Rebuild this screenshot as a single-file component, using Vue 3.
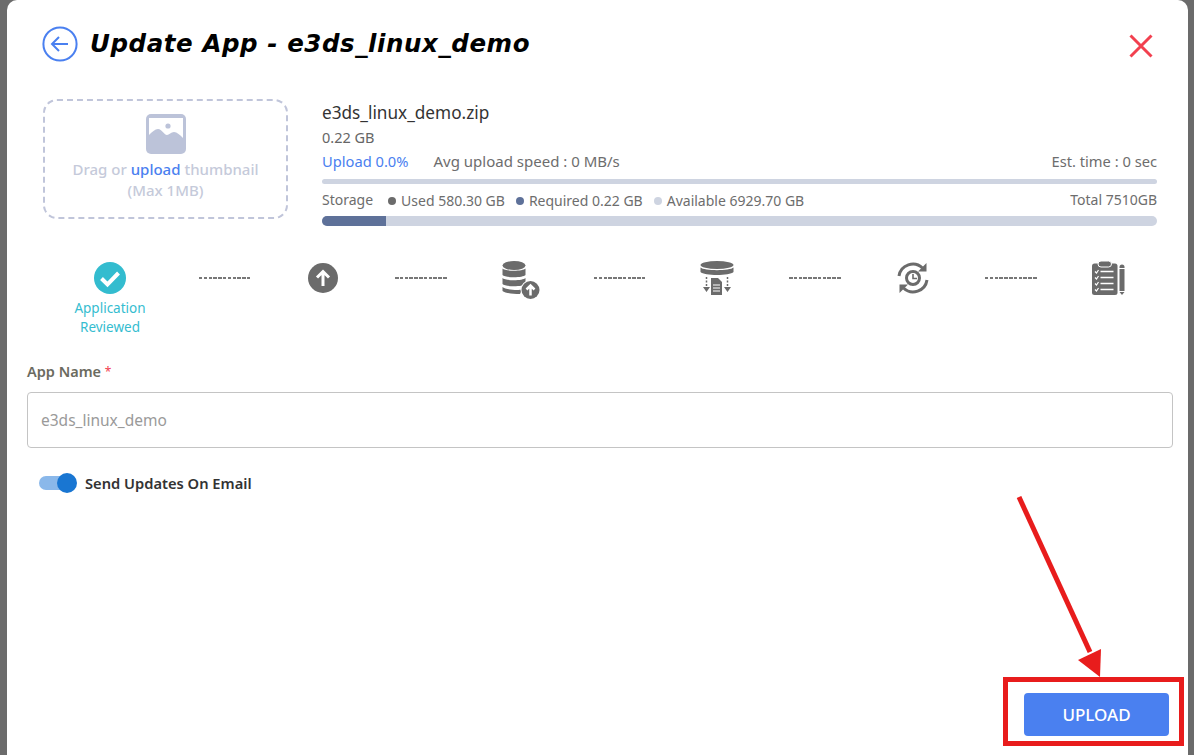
<script setup>
const legend = [
  { label: 'Used 580.30 GB', tone: 'used' },
  { label: 'Required 0.22 GB', tone: 'req' },
  { label: 'Available 6929.70 GB', tone: 'avail' }
]
</script>

<template>
  <div class="page">
    <main class="modal">
      <header class="head">
        <svg class="back" viewBox="0 0 36 36" fill="none" stroke="#4a80f0">
          <circle cx="18" cy="18" r="16.6" stroke-width="2" />
          <path d="M26 18H10M17 11l-7 7 7 7" stroke-width="2" />
        </svg>
        <h1 class="title">Update App - e3ds_linux_demo</h1>
        <svg class="close" viewBox="0 0 24 24" fill="none" stroke="#f2404f" stroke-width="3">
          <path d="M1.5 1.5l21 21M22.5 1.5l-21 21" />
        </svg>
      </header>

      <section class="info">
        <div class="drop">
          <svg class="thumb" viewBox="0 0 40 40">
            <rect width="40" height="40" rx="5" fill="#bcc3d9" />
            <path d="M3 4h34v20c-3-3-6-6-9-6-3 0-5 3-7 3-3 0-5-6-9-6-3 0-6 3-9 6z" fill="#fff" />
            <circle cx="22" cy="12" r="2.6" fill="#bcc3d9" />
          </svg>
          <p class="drop-text">Drag or <b>upload</b> thumbnail<br />(Max 1MB)</p>
        </div>
        <div class="meta">
          <div class="fname">e3ds_linux_demo.zip</div>
          <div class="fsize">0.22 GB</div>
          <div class="row up-row">
            <span class="up">Upload 0.0%</span>
            <span class="speed">Avg upload speed : 0 MB/s</span>
            <span class="push est">Est. time : 0 sec</span>
          </div>
          <div class="bar thin"></div>
          <div class="row store">
            <span class="store-l">Storage</span>
            <span v-for="item in legend" :key="item.tone" class="lg">
              <i :class="['dot', item.tone]"></i>{{ item.label }}
            </span>
            <span class="push">Total 7510GB</span>
          </div>
          <div class="bar thick"><div class="fill"></div></div>
        </div>
      </section>

      <section class="stepper">
        <div class="step first">
          <svg class="ic-check" viewBox="0 0 32 32">
            <circle cx="16" cy="16" r="16" fill="#33bccf" />
            <path d="M7.5 16.5l6 6L24.5 11" fill="none" stroke="#fff" stroke-width="4" />
          </svg>
          <div class="step-label">Application<br />Reviewed</div>
        </div>
        <i class="dash d1"></i>
        <svg class="ic-up" viewBox="0 0 30 30">
          <circle cx="15" cy="15" r="15" fill="#6b6b6b" />
          <path d="M15 23V9M9 14.5L15 8.5l6 6" fill="none" stroke="#fff" stroke-width="3" />
        </svg>
        <i class="dash d2"></i>
        <svg class="ic-db" viewBox="0 0 38 38" fill="#6b6b6b">
          <ellipse cx="12" cy="4.500" rx="11.500" ry="4.500" />
          <path d="M.5 7.500C3 10.500 21 10.500 23.500 7.500V14C21 17 3 17 .5 14z" />
          <path d="M.5 17C3 20 21 20 23.500 17V23C21 26 3 26 .5 23z" />
          <path d="M.5 26C3 29 17 29.500 20 28.500L18 33C10 33 3 32 .5 30z" />
          <circle cx="28.500" cy="29" r="10" fill="#fff" />
          <circle cx="28.500" cy="29" r="9" />
          <path d="M28.500 34.500V25M24.500 28.500l4-4 4 4" fill="none" stroke="#fff" stroke-width="2.500" />
        </svg>
        <i class="dash d3"></i>
        <svg class="ic-dbdoc" viewBox="0 0 34 34" fill="#6b6b6b">
          <ellipse cx="17" cy="4" rx="16.500" ry="4" />
          <path d="M.5 6.500C4 10 30 10 33.500 6.500V11C30 15 4 15 .5 11z" />
          <path d="M11 17h7l4 4v13H11z" />
          <path d="M13 24h7M13 27h7M13 30h7" stroke="#fff" stroke-width="1.200" />
          <path d="M6.500 16v12" stroke="#6b6b6b" stroke-width="1.500" stroke-dasharray="2 1.500" />
          <path d="M27.500 16v12" stroke="#6b6b6b" stroke-width="1.500" stroke-dasharray="2 1.500" />
          <path d="M3 26h7l-3.500 5zM24 26h7l-3.500 5z" />
        </svg>
        <i class="dash d4"></i>
        <svg class="ic-sync" viewBox="0 0 32 32" fill="none" stroke="#6b6b6b" stroke-width="3">
          <path d="M2 14A14 14 0 0 1 25.500 6" />
          <path d="M30 18A14 14 0 0 1 6.500 26" />
          <path d="M29.500 1v8.500H21z" fill="#6b6b6b" stroke="none" />
          <path d="M2.500 31v-8.500H11z" fill="#6b6b6b" stroke="none" />
          <circle cx="16" cy="16" r="6.500" stroke-width="3" />
          <path d="M16 12v4.500h4" stroke-width="1.600" />
        </svg>
        <i class="dash d5"></i>
        <svg class="ic-clip" viewBox="0 0 34 34" fill="#6b6b6b">
          <rect x="0" y="2.500" width="25.500" height="31.500" rx="2.500" />
          <rect x="6" y="0" width="13.500" height="6" rx="3" stroke="#fff" stroke-width="1" />
          <path d="M8.500 10.500h13M8.500 16.500h13M8.500 22.500h13M8.500 28.500h13" stroke="#fff" stroke-width="1.500" />
          <path d="M3 10.500l1.500 1.500 2-3M3 16.500l1.500 1.500 2-3M3 22.500l1.500 1.500 2-3M3 28.500l1.500 1.500 2-3" fill="none" stroke="#fff" stroke-width="1.200" />
          <path d="M27.500 6a2.500 2.500 0 0 1 5 0v1h-5zM27.500 8h5v22h-5zM27.500 31h5L30 34z" />
        </svg>
      </section>

      <label class="field-label">App Name <em>*</em></label>
      <div class="input">e3ds_linux_demo</div>

      <div class="toggle-row">
        <span class="toggle"><i></i></span>
        <span class="toggle-text">Send Updates On Email</span>
      </div>

      <footer class="foot">
        <button class="upload" type="button">UPLOAD</button>
      </footer>
    </main>

    <div class="mark-box"></div>
    <svg class="mark-arrow" viewBox="0 0 100 190">
      <path d="M3 1L74 156" stroke="#e81c1c" stroke-width="5" fill="none" />
      <path d="M62 164L85 153L84 181z" fill="#e81c1c" />
    </svg>
  </div>
</template>

<style>
html, body { margin: 0; background: #6b6b6b; }
</style>

<style scoped>
.page {
  position: relative;
  width: 1194px;
  height: 755px;
  overflow: hidden;
  background: #6b6b6b;
  font-family: "Noto Sans", sans-serif;
}
.modal {
  box-sizing: border-box;
  margin-left: 7px;
  width: 1181px;
  height: 755px;
  background: #fff;
  border-radius: 10px 10px 0 0;
  padding: 26px 14px 0 20px;
  display: flex;
  flex-direction: column;
}
.head { display: flex; align-items: center; height: 36px; padding-left: 15px; }
.back { width: 36px; height: 36px; flex: none; }
.title {
  margin: 0 0 0 12px;
  font: italic 700 24.5px/36px "DejaVu Sans", sans-serif;
  letter-spacing: .58px;
  color: #000;
  white-space: nowrap;
}
.close { width: 24px; height: 24px; margin-left: auto; margin-right: 21px; margin-top: 3px; flex: none; }

.info { display: flex; margin-top: 37px; padding-left: 16px; padding-right: 17px; }
.drop {
  box-sizing: border-box;
  width: 245px;
  height: 120px;
  border: 2px dashed #c0c5da;
  border-radius: 14px;
  display: flex;
  flex-direction: column;
  align-items: center;
  padding-top: 13px;
  flex: none;
}
.thumb { width: 40px; height: 40px; }
.drop-text {
  margin: 5px 0 0;
  text-align: center;
  font-size: 15px;
  line-height: 21px;
  font-weight: 500;
  color: #c5cada;
}
.drop-text b { color: #4a80f0; font-weight: 500; }
.meta { flex: 1; margin-left: 34px; min-width: 0; }
.fname { font-size: 17.200px; line-height: 22px; color: #333; margin-top: 3px; }
.fsize { font-size: 14.500px; line-height: 22px; color: #666; margin-top: 2px; }
.row { display: flex; align-items: baseline; font-size: 14px; color: #6d6d6d; }
.up-row { line-height: 24px; margin-top: 1px; font-size: 14.700px; }
.up { color: #4a80f0; }
.speed { margin-left: 25px; font-size: 15px; }
.push { margin-left: auto; }
.bar { background: #ced4e1; border-radius: 4px; overflow: hidden; }
.thin { height: 5px; margin-top: 6px; }
.store { line-height: 20px; margin-top: 6px; }
.store-l { margin-right: 15px; }
.lg { display: inline-flex; align-items: center; margin-right: 11px; }
.dot { width: 8px; height: 8px; border-radius: 50%; margin-right: 5px; }
.used { background: #6b6b6b; }
.req { background: #5e7199; }
.avail { background: #ced4e1; }
.thick { height: 10px; margin-top: 5px; border-radius: 5px; }
.fill { width: 64px; height: 100%; background: #5e7199; }

.stepper { display: flex; align-items: flex-start; margin-top: 35px; padding-left: 33px; height: 80px; }
.step { width: 100px; display: flex; flex-direction: column; align-items: center; flex: none; }
.ic-check { width: 32px; height: 32px; margin-top: 1px; }
.step-label { margin-top: 5px; text-align: center; font-size: 13.500px; line-height: 19px; color: #35bdd0; }
.dash {
  width: 53px;
  height: 2px;
  margin-top: 16px;
  flex: none;
  background: repeating-linear-gradient(90deg, #777 0 3.500px, transparent 3.500px 4.800px);
}
.d1 { margin-left: 39px; margin-right: 56px; }
.d2 { margin-left: 57px; margin-right: 54px; }
.d3 { margin-left: 54px; margin-right: 53px; }
.d4 { margin-left: 55px; margin-right: 55px; }
.d5 { margin-left: 56px; margin-right: 54px; }
.ic-up { width: 30px; height: 30px; margin-top: 2px; flex: none; }
.ic-db { width: 38px; height: 38px; flex: none; }
.ic-dbdoc { width: 34px; height: 34px; flex: none; }
.ic-sync { width: 32px; height: 32px; margin-top: 1px; flex: none; }
.ic-clip { width: 34px; height: 34px; flex: none; }

.field-label { font-size: 14.500px; line-height: 20px; font-weight: 600; color: #6b6b60; margin-top: 20px; }
.field-label em { color: #f2404f; font-style: normal; font-weight: 400; font-size: 12px; vertical-align: 1px; }
.input {
  box-sizing: border-box;
  margin-top: 10px;
  width: 1146px;
  height: 56px;
  border: 1px solid #c4c4c4;
  border-radius: 4px;
  padding-left: 13px;
  display: flex;
  align-items: center;
  font-size: 15.500px;
  color: #9a9a9a;
}
.toggle-row { display: flex; align-items: center; margin-top: 25px; padding-left: 12px; height: 20px; }
.toggle { position: relative; width: 34px; height: 14px; border-radius: 7px; background: #8ab8ea; flex: none; }
.toggle i {
  position: absolute;
  right: -4px;
  top: -3px;
  width: 20px;
  height: 20px;
  border-radius: 50%;
  background: #1976d2;
}
.toggle-text { margin-left: 12px; font-size: 14.700px; font-weight: 600; color: #333; }
.foot { margin-top: auto; display: flex; justify-content: flex-end; padding-right: 5px; padding-bottom: 19px; }
.upload {
  width: 145px;
  height: 43px;
  border: 0;
  border-radius: 4px;
  background: #4a80f0;
  color: #fff;
  font: 500 17px "Noto Sans", sans-serif;
}
.mark-box {
  position: absolute;
  left: 1003px;
  top: 677px;
  width: 181px;
  height: 69px;
  box-sizing: border-box;
  border: 5px solid #e81c1c;
}
.mark-arrow { position: absolute; left: 1016px; top: 496px; width: 100px; height: 190px; }
</style>
